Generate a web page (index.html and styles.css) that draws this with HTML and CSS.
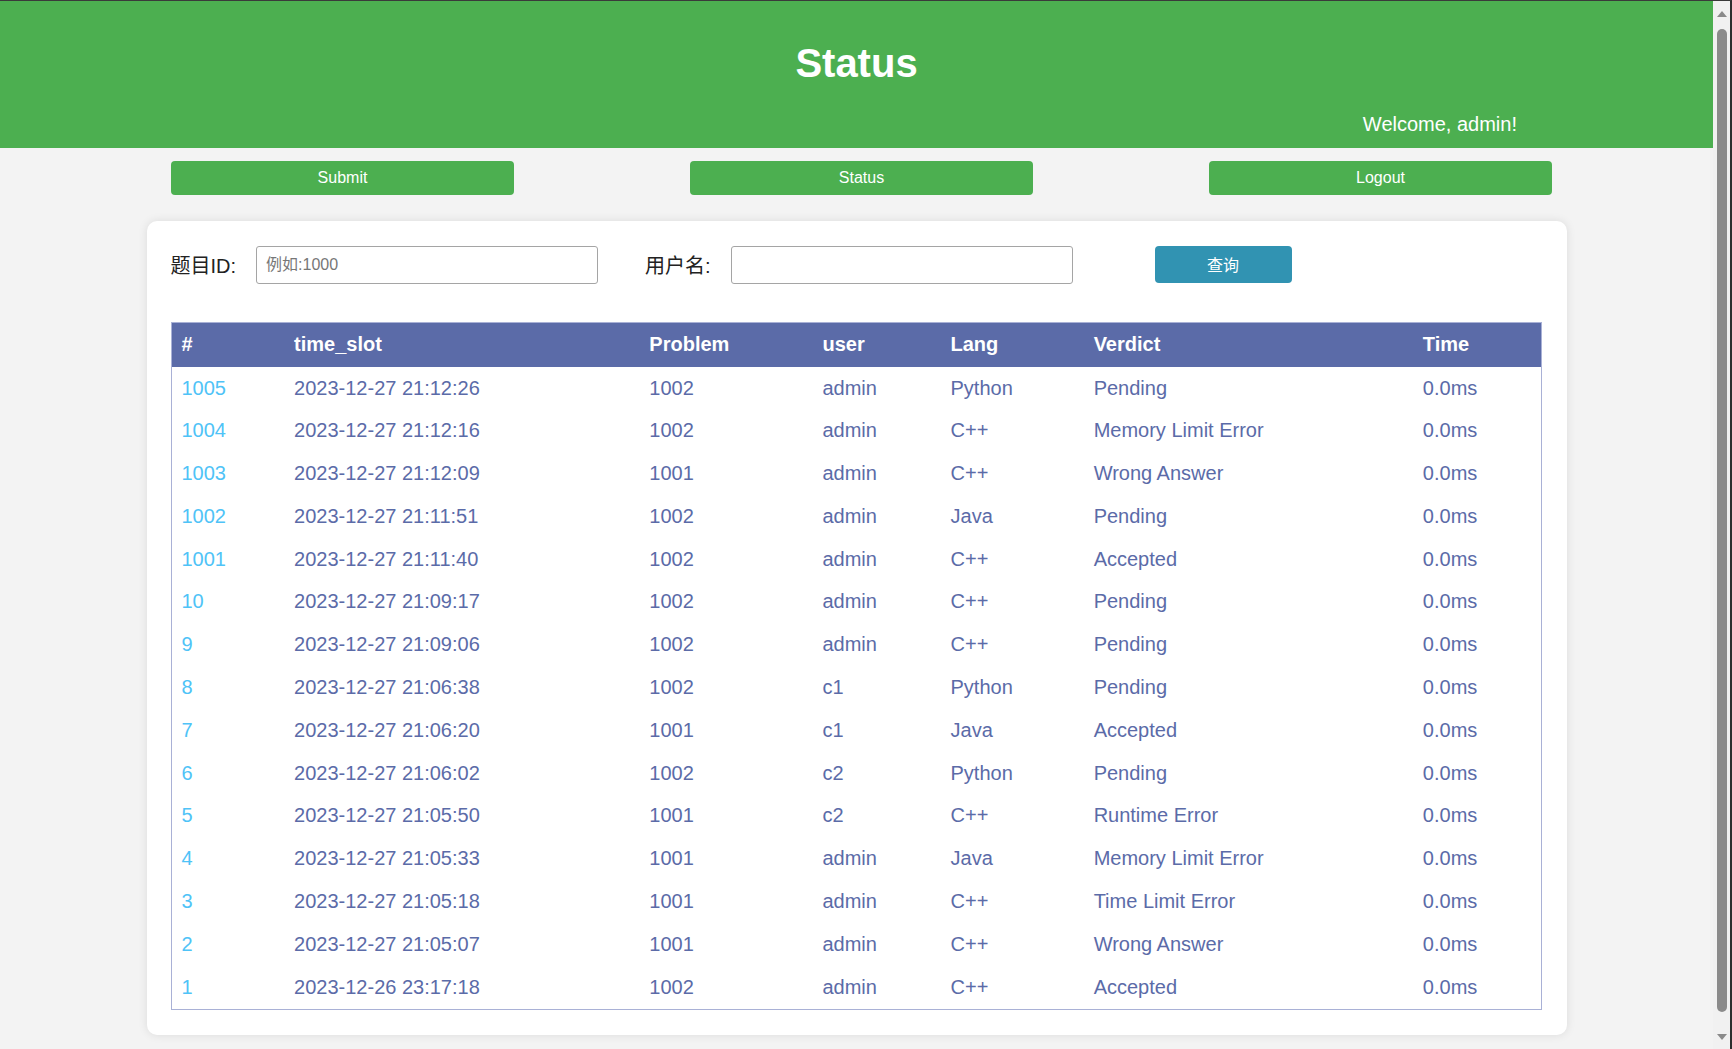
FILE: index.html
```html
<!DOCTYPE html>
<html lang="zh">
<head>
<meta charset="utf-8">
<title>Status</title>
<link rel="stylesheet" href="styles.css">
</head>
<body>
<header class="top">
  <h1 class="title">Status</h1>
  <p class="welcome">Welcome, admin!</p>
</header>
<nav class="nav">
  <button class="nav-btn">Submit</button>
  <button class="nav-btn">Status</button>
  <button class="nav-btn">Logout</button>
</nav>
<main class="card">
  <form class="filter">
    <label class="flabel">题目ID:</label>
    <input class="finput" type="text" placeholder="例如:1000">
    <label class="flabel flabel-2">用户名:</label>
    <input class="finput" type="text">
    <button type="button" class="query">查询</button>
  </form>
  <table class="status">
    <colgroup>
      <col class="c1"><col class="c2"><col class="c3"><col class="c4"><col class="c5"><col class="c6"><col class="c7">
    </colgroup>
    <thead>
      <tr><th>#</th><th>time_slot</th><th>Problem</th><th>user</th><th>Lang</th><th>Verdict</th><th>Time</th></tr>
    </thead>
    <tbody>
      <tr><td><a class="id">1005</a></td><td>2023-12-27 21:12:26</td><td>1002</td><td>admin</td><td>Python</td><td>Pending</td><td>0.0ms</td></tr>
      <tr><td><a class="id">1004</a></td><td>2023-12-27 21:12:16</td><td>1002</td><td>admin</td><td>C++</td><td>Memory Limit Error</td><td>0.0ms</td></tr>
      <tr><td><a class="id">1003</a></td><td>2023-12-27 21:12:09</td><td>1001</td><td>admin</td><td>C++</td><td>Wrong Answer</td><td>0.0ms</td></tr>
      <tr><td><a class="id">1002</a></td><td>2023-12-27 21:11:51</td><td>1002</td><td>admin</td><td>Java</td><td>Pending</td><td>0.0ms</td></tr>
      <tr><td><a class="id">1001</a></td><td>2023-12-27 21:11:40</td><td>1002</td><td>admin</td><td>C++</td><td>Accepted</td><td>0.0ms</td></tr>
      <tr><td><a class="id">10</a></td><td>2023-12-27 21:09:17</td><td>1002</td><td>admin</td><td>C++</td><td>Pending</td><td>0.0ms</td></tr>
      <tr><td><a class="id">9</a></td><td>2023-12-27 21:09:06</td><td>1002</td><td>admin</td><td>C++</td><td>Pending</td><td>0.0ms</td></tr>
      <tr><td><a class="id">8</a></td><td>2023-12-27 21:06:38</td><td>1002</td><td>c1</td><td>Python</td><td>Pending</td><td>0.0ms</td></tr>
      <tr><td><a class="id">7</a></td><td>2023-12-27 21:06:20</td><td>1001</td><td>c1</td><td>Java</td><td>Accepted</td><td>0.0ms</td></tr>
      <tr><td><a class="id">6</a></td><td>2023-12-27 21:06:02</td><td>1002</td><td>c2</td><td>Python</td><td>Pending</td><td>0.0ms</td></tr>
      <tr><td><a class="id">5</a></td><td>2023-12-27 21:05:50</td><td>1001</td><td>c2</td><td>C++</td><td>Runtime Error</td><td>0.0ms</td></tr>
      <tr><td><a class="id">4</a></td><td>2023-12-27 21:05:33</td><td>1001</td><td>admin</td><td>Java</td><td>Memory Limit Error</td><td>0.0ms</td></tr>
      <tr><td><a class="id">3</a></td><td>2023-12-27 21:05:18</td><td>1001</td><td>admin</td><td>C++</td><td>Time Limit Error</td><td>0.0ms</td></tr>
      <tr><td><a class="id">2</a></td><td>2023-12-27 21:05:07</td><td>1001</td><td>admin</td><td>C++</td><td>Wrong Answer</td><td>0.0ms</td></tr>
      <tr><td><a class="id">1</a></td><td>2023-12-26 23:17:18</td><td>1002</td><td>admin</td><td>C++</td><td>Accepted</td><td>0.0ms</td></tr>
    </tbody>
  </table>
</main>
<div class="scrollbar" aria-hidden="true">
  <span class="sb-up"></span>
  <span class="sb-thumb"></span>
  <span class="sb-down"></span>
</div>
</body>
</html>
```
FILE: styles.css
```css
html, body {
  margin: 0;
  padding: 0;
}
body {
  background: #f3f3f3;
  font-family: "Liberation Sans", Arial, "Noto Sans CJK SC", sans-serif;
  color: #333;
  margin-right: 19px;
  padding-bottom: 26px;
  border-top: 1px solid #3a3a3a;
}
.top {
  background: #4caf50;
  color: #fff;
  padding: 39px 196px 12px 0;
}
.title {
  margin: 0 0 27px 0;
  font-size: 40px;
  line-height: 46px;
  font-weight: bold;
  text-align: center;
  padding-left: 196px;
}
.welcome {
  margin: 0;
  font-size: 20px;
  line-height: 23px;
  text-align: right;
}
.nav {
  display: flex;
  gap: 176px;
  padding-left: 171px;
  margin-top: 13px;
}
.nav-btn {
  width: 343px;
  height: 34px;
  background: #4caf50;
  color: #fff;
  border: none;
  border-radius: 4px;
  font-family: "Liberation Sans", Arial, sans-serif;
  font-size: 16px;
  padding: 0;
}
.card {
  display: block;
  width: 1372px;
  margin: 26px auto 0;
  padding: 25px 24px 25px;
  background: #fff;
  border-radius: 10px;
  box-shadow: 0 0 10px rgba(0, 0, 0, 0.1);
}
.filter {
  display: flex;
  align-items: center;
  height: 38px;
  margin: 0;
}
.flabel {
  font-size: 20px;
  color: #222;
  margin-right: 20px;
  margin-top: -2px;
  font-family: "Liberation Sans", Arial, "Noto Sans CJK SC", sans-serif;
}
.flabel-2 {
  margin-left: 47px;
}
.finput {
  box-sizing: border-box;
  width: 342px;
  height: 38px;
  border: 1px solid #a5a5a5;
  border-radius: 3px;
  padding: 0 9px;
  font-size: 16px;
  font-family: "Liberation Sans", Arial, "Noto Sans CJK SC", sans-serif;
  color: #333;
  background: #fff;
}
.finput::placeholder {
  color: #777;
}
.query {
  margin-left: 82px;
  width: 137px;
  height: 37px;
  margin-top: -2px;
  background: #3193b2;
  color: #fff;
  border: none;
  border-radius: 4px;
  font-size: 16px;
  font-family: "Liberation Sans", Arial, "Noto Sans CJK SC", sans-serif;
}
.status {
  width: 1371px;
  margin-top: 38px;
  border-collapse: collapse;
  table-layout: fixed;
  border: 1px solid #a9b1d6;
  font-size: 20px;
}
.c1 { width: 113px; }
.c2 { width: 355px; }
.c3 { width: 173px; }
.c4 { width: 128px; }
.c5 { width: 143px; }
.c6 { width: 329px; }
.c7 { width: 128px; }
.status th {
  background: #5b6ba8;
  color: #fff;
  font-weight: bold;
  text-align: left;
  padding: 10px 10px 11px;
  line-height: 23px;
}
.status td {
  color: #5b6ba8;
  text-align: left;
  padding: 9.5px 10px 10.5px;
  line-height: 22.8px;
  white-space: nowrap;
}
.id {
  color: #4fc3f7;
  text-decoration: none;
}

/* browser scrollbar as seen in the screenshot */
.scrollbar {
  position: fixed;
  top: 0;
  right: 0;
  bottom: 0;
  width: 17px;
  background: #f1f1f1;
  border-right: 2px solid #2e2e2e;
  border-top: 1px solid #3a3a3a;
}
.sb-up, .sb-down {
  position: absolute;
  left: 4px;
  width: 0;
  height: 0;
  border-left: 5px solid transparent;
  border-right: 5px solid transparent;
}
.sb-up {
  top: 10px;
  border-bottom: 6px solid #8a8a8a;
}
.sb-down {
  bottom: 9px;
  border-top: 6px solid #8a8a8a;
}
.sb-thumb {
  position: absolute;
  left: 4px;
  width: 10px;
  top: 28px;
  bottom: 37px;
  background: #8b8b8b;
  border-radius: 5px;
}
```
